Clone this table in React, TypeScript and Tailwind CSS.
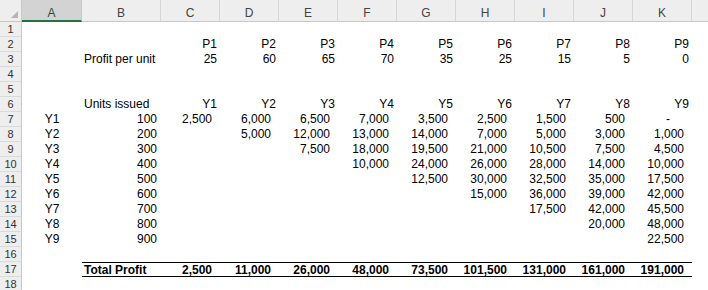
import React from "react";

type Cell = { t: string; c: string };

const COLS = ["A", "B", "C", "D", "E", "F", "G", "H", "I", "J", "K"];
const WIDTHS = ["w-[60px]", "w-[79px]", "w-[59px]", "w-[59px]", "w-[59px]", "w-[59px]", "w-[59px]", "w-[59px]", "w-[59px]", "w-[59px]", "w-[59px]"];

const L = "text-left pl-[2px]";
const R = "text-right pr-[3px]";
const RB = "text-right pr-[4px]";
const RN = "text-right pr-[8px]";
const C = "text-center";

const e = (): Cell => ({ t: "", c: "" });

function row(cells: Cell[]): Cell[] {
  const out = [...cells];
  while (out.length < 11) out.push(e());
  return out;
}

const matrix: (string | null)[][] = [
  ["2,500", "6,000", "6,500", "7,000", "3,500", "2,500", "1,500", "500", "-"],
  [null, "5,000", "12,000", "13,000", "14,000", "7,000", "5,000", "3,000", "1,000"],
  [null, null, "7,500", "18,000", "19,500", "21,000", "10,500", "7,500", "4,500"],
  [null, null, null, "10,000", "24,000", "26,000", "28,000", "14,000", "10,000"],
  [null, null, null, null, "12,500", "30,000", "32,500", "35,000", "17,500"],
  [null, null, null, null, null, "15,000", "36,000", "39,000", "42,000"],
  [null, null, null, null, null, null, "17,500", "42,000", "45,500"],
  [null, null, null, null, null, null, null, "20,000", "48,000"],
  [null, null, null, null, null, null, null, null, "22,500"],
];

const rows: Cell[][] = [];
rows.push(row([]));
rows.push(row([e(), e(), ...["P1", "P2", "P3", "P4", "P5", "P6", "P7", "P8", "P9"].map((t) => ({ t, c: R }))]));
rows.push(row([e(), { t: "Profit per unit", c: L }, ...["25", "60", "65", "70", "35", "25", "15", "5", "0"].map((t) => ({ t, c: R }))]));
rows.push(row([]));
rows.push(row([]));
rows.push(row([e(), { t: "Units issued", c: L }, ...["Y1", "Y2", "Y3", "Y4", "Y5", "Y6", "Y7", "Y8", "Y9"].map((t) => ({ t, c: R }))]));
matrix.forEach((m, i) => {
  rows.push(
    row([
      { t: `Y${i + 1}`, c: C },
      { t: String((i + 1) * 100), c: RB },
      ...m.map((v) => (v === null ? e() : v === "-" ? { t: "-", c: "text-right pr-[22px]" } : { t: v, c: RN })),
    ])
  );
});
rows.push(row([]));
const totals = ["2,500", "11,000", "26,000", "48,000", "73,500", "101,500", "131,000", "161,000", "191,000"];
rows.push(row([e(), { t: "Total Profit", c: L }, ...totals.map((t) => ({ t, c: RN }))]));
rows.push(row([]));

export default function App() {
  return (
    <div
      className="w-[708px] h-[290px] overflow-hidden bg-white text-black"
      style={{ fontFamily: '"Liberation Sans", Arial, sans-serif' }}
    >
      {/* column header */}
      <div className="flex h-[22px]">
        <div className="relative w-[22px] h-[22px] shrink-0 bg-[#eeeeee] border-r border-b border-[#c8c8c8]">
          <div className="absolute right-[3px] bottom-[3px] w-0 h-0 border-l-[7px] border-l-transparent border-b-[7px] border-b-[#b4b4b4]" />
        </div>
        {COLS.map((col, i) =>
          i === 0 ? (
            <div
              key={col}
              className="w-[60px] h-[22px] shrink-0 bg-[#d3d3d3] border-r border-[#c8c8c8] border-b-2 border-b-[#217346] text-center text-[12px] leading-[16px] pt-[5px] text-[#2b4a37]"
            >
              {col}
            </div>
          ) : (
            <div
              key={col}
              className={`${WIDTHS[i]} h-[22px] shrink-0 bg-[#eeeeee] border-r border-[#d6d6d6] border-b border-b-[#c8c8c8] text-center text-[12px] leading-[16px] pt-[5px] text-[#444444]`}
            >
              {col}
            </div>
          )
        )}
        <div className="flex-1 h-[22px] bg-[#eeeeee] border-b border-[#c8c8c8]" />
      </div>
      {rows.map((cells, ri) => {
        const isTotal = ri === 16;
        return (
          <div key={ri} className="flex h-[15px]">
            <div className="w-[22px] h-[15px] shrink-0 bg-[#eeeeee] border-r border-[#c8c8c8] border-b border-b-[#dadada] text-center text-[11px] leading-[14px] text-[#333333]">
              {ri + 1}
            </div>
            {cells.map((cell, ci) => {
              const border = isTotal && ci >= 1 ? "border-t border-b border-black font-bold" : "";
              return (
                <div
                  key={ci}
                  className={`${WIDTHS[ci]} h-[15px] shrink-0 overflow-visible whitespace-nowrap text-[12px] leading-[14px] ${cell.c} ${border}`}
                >
                  {cell.t}
                </div>
              );
            })}
          </div>
        );
      })}
    </div>
  );
}
